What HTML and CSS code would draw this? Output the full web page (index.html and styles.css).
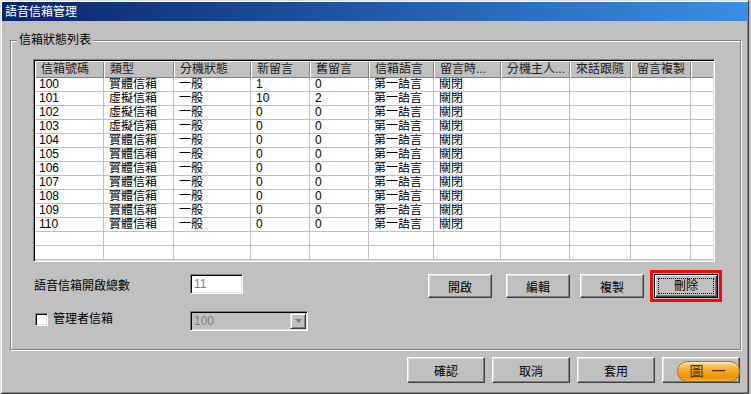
FILE: index.html
```html
<!DOCTYPE html>
<html>
<head>
    <title>語音信箱管理</title>
    <link rel="stylesheet" href="styles.css">
    <meta charset="UTF-8">
</head>
<body>
    <div class="window">
        <div class="title-bar">語音信箱管理</div>

        <div class="group">
            <span class="group-label">信箱狀態列表</span>

            <div class="list-view">
                <div class="list-row list-header">
                    <span>信箱號碼</span><span>類型</span><span>分機狀態</span><span>新留言</span><span>舊留言</span><span>信箱語言</span><span>留言時...</span><span>分機主人...</span><span>來話跟隨</span><span>留言複製</span><span></span>
                </div>
                <div class="list-row"><span>100</span><span>實體信箱</span><span>一般</span><span>1</span><span>0</span><span>第一語言</span><span>關閉</span><span></span><span></span><span></span><span></span></div>
                <div class="list-row"><span>101</span><span>虛擬信箱</span><span>一般</span><span>10</span><span>2</span><span>第一語言</span><span>關閉</span><span></span><span></span><span></span><span></span></div>
                <div class="list-row"><span>102</span><span>虛擬信箱</span><span>一般</span><span>0</span><span>0</span><span>第一語言</span><span>關閉</span><span></span><span></span><span></span><span></span></div>
                <div class="list-row"><span>103</span><span>虛擬信箱</span><span>一般</span><span>0</span><span>0</span><span>第一語言</span><span>關閉</span><span></span><span></span><span></span><span></span></div>
                <div class="list-row"><span>104</span><span>實體信箱</span><span>一般</span><span>0</span><span>0</span><span>第一語言</span><span>關閉</span><span></span><span></span><span></span><span></span></div>
                <div class="list-row"><span>105</span><span>實體信箱</span><span>一般</span><span>0</span><span>0</span><span>第一語言</span><span>關閉</span><span></span><span></span><span></span><span></span></div>
                <div class="list-row"><span>106</span><span>實體信箱</span><span>一般</span><span>0</span><span>0</span><span>第一語言</span><span>關閉</span><span></span><span></span><span></span><span></span></div>
                <div class="list-row"><span>107</span><span>實體信箱</span><span>一般</span><span>0</span><span>0</span><span>第一語言</span><span>關閉</span><span></span><span></span><span></span><span></span></div>
                <div class="list-row"><span>108</span><span>實體信箱</span><span>一般</span><span>0</span><span>0</span><span>第一語言</span><span>關閉</span><span></span><span></span><span></span><span></span></div>
                <div class="list-row"><span>109</span><span>實體信箱</span><span>一般</span><span>0</span><span>0</span><span>第一語言</span><span>關閉</span><span></span><span></span><span></span><span></span></div>
                <div class="list-row"><span>110</span><span>實體信箱</span><span>一般</span><span>0</span><span>0</span><span>第一語言</span><span>關閉</span><span></span><span></span><span></span><span></span></div>
                <div class="list-row"><span></span><span></span><span></span><span></span><span></span><span></span><span></span><span></span><span></span><span></span><span></span></div>
                <div class="list-row"><span></span><span></span><span></span><span></span><span></span><span></span><span></span><span></span><span></span><span></span><span></span></div>
            </div>

            <div class="controls">
                <div class="form-grid">
                    <span class="form-label">語音信箱開啟總數</span>
                    <div class="text-field">11</div>
                    <label class="check-label"><span class="checkbox"></span>管理者信箱</label>
                    <div class="combo">
                        <span class="combo-value">100</span>
                        <span class="combo-button">
                            <svg width="7" height="4" viewBox="0 0 7 4"><path d="M0 0h7L3.5 4z" fill="#808080"/></svg>
                        </span>
                    </div>
                </div>
                <div class="action-buttons">
                    <button class="win-button open-button">開啟</button>
                    <button class="win-button">編輯</button>
                    <button class="win-button">複製</button>
                    <button class="win-button default-button"><span class="focus-rect">刪除</span></button>
                </div>
            </div>
        </div>

        <div class="dialog-buttons">
            <button class="win-button wide">確認</button>
            <button class="win-button wide">取消</button>
            <button class="win-button wide">套用</button>
            <button class="win-button wide"></button>
            <span class="figure-badge">圖 一</span>
        </div>
    </div>
</body>
</html>
```

FILE: styles.css
```css
body {
    margin: 0;
    background-color: #c0c0c0;
    font-family: "Liberation Sans", "Noto Sans CJK TC", sans-serif;
    font-size: 12px;
    color: #000;
}

.window {
    width: 749px;
    height: 394px;
    box-sizing: border-box;
    border: 1px solid;
    border-color: #dfdfdf #404040 #404040 #dfdfdf;
    box-shadow: inset 1px 1px 0 #fff, inset -1px -1px 0 #808080;
    padding: 1px;
}

.title-bar {
    height: 17px;
    padding: 2px 0 0 3px;
    line-height: 17px;
    color: #fff;
    background: linear-gradient(to right, #0a246a, #3a8ee6);
}

/* group box with etched border */
.group {
    position: relative;
    height: 310px;
    box-sizing: border-box;
    margin: 19px 6px 0 8px;
    padding: 18px 0 0 22px;
    border: 1px solid #808080;
    box-shadow: inset 1px 1px 0 #fff, 1px 1px 0 #fff;
}

.group-label {
    position: absolute;
    left: 6px;
    top: -8px;
    padding: 0 2px;
    line-height: 14px;
    background-color: #c0c0c0;
}

/* list view */
.list-view {
    width: 682px;
    height: 203px;
    box-sizing: border-box;
    padding: 1px;
    border: 1px solid;
    border-color: #808080 #fff #fff #808080;
    box-shadow: inset 1px 1px 0 #000, inset -1px -1px 0 #dfdfdf;
    background-color: #fff;
    overflow: hidden;
}

.list-row {
    display: grid;
    grid-template-columns: 69px 70px 77px 59px 59px 65px 67px 69px 61px 60px 1fr;
    height: 14px;
}

.list-row span {
    border-right: 1px solid #c0c0c0;
    border-bottom: 1px solid #c0c0c0;
    padding-left: 5px;
    line-height: 13px;
    white-space: nowrap;
    overflow: hidden;
}

.list-row span:first-child {
    padding-left: 4px;
}

.list-row span:last-child {
    border-right: none;
}

.list-header {
    height: 17px;
}

.list-header span,
.list-header span:first-child {
    padding-left: 6px;
    line-height: 17px;
    border: none;
    background-color: #c0c0c0;
    color: #202020;
    box-shadow: inset 1px 1px 0 #fff, inset -1px -1px 0 #808080;
}

.list-header span:last-child {
    box-shadow: inset 1px 1px 0 #fff, inset 0 -1px 0 #808080;
}

/* form controls */
.controls {
    display: flex;
    margin-top: 12px;
}

.form-grid {
    display: grid;
    grid-template-columns: 157px 118px;
    grid-template-rows: 20px 20px;
    row-gap: 17px;
    align-items: center;
}

.form-label {
    padding-left: 1px;
}

.text-field,
.combo {
    height: 20px;
    box-sizing: border-box;
    padding: 1px;
    border: 1px solid;
    border-color: #808080 #fff #fff #808080;
    box-shadow: inset 1px 1px 0 #000, inset -1px -1px 0 #dfdfdf;
    color: #808080;
}

.text-field {
    width: 53px;
    padding-left: 3px;
    line-height: 16px;
    background-color: #fff;
}

.check-label {
    display: flex;
    align-items: center;
    gap: 5px;
    align-self: start;
    margin-top: 1px;
    line-height: 14px;
}

.checkbox {
    width: 13px;
    height: 13px;
    box-sizing: border-box;
    margin-left: 2px;
    border: 1px solid;
    border-color: #808080 #fff #fff #808080;
    box-shadow: inset 1px 1px 0 #000, inset -1px -1px 0 #dfdfdf;
    background-color: #fff;
}

.combo {
    width: 118px;
    display: flex;
    justify-content: space-between;
    background-color: #c0c0c0;
}

.combo-value {
    padding-left: 2px;
    line-height: 16px;
}

.combo-button {
    width: 16px;
    height: 16px;
    box-sizing: border-box;
    display: flex;
    align-items: center;
    justify-content: center;
    border: 1px solid;
    border-color: #dfdfdf #404040 #404040 #dfdfdf;
    box-shadow: inset 1px 1px 0 #fff, inset -1px -1px 0 #808080;
}

/* buttons */
.win-button {
    width: 64px;
    height: 24px;
    padding: 0;
    font-family: inherit;
    font-size: 12px;
    color: #000;
    background-color: #c0c0c0;
    border: 1px solid;
    border-color: #fff #404040 #404040 #fff;
    box-shadow: inset -1px -1px 0 #808080, inset 1px 1px 0 #dfdfdf;
}

.action-buttons {
    display: flex;
    gap: 10px;
    margin-left: 120px;
}

.action-buttons .open-button {
    margin-right: 4px;
}

.default-button {
    border: 1px solid #000;
    box-shadow: inset 1px 1px 0 #fff, inset -1px -1px 0 #404040, inset -2px -2px 0 #808080;
    outline: 3px solid #f00;
    outline-offset: 1px;
    padding: 3px;
}

.focus-rect {
    display: block;
    height: 100%;
    box-sizing: border-box;
    border: 1px dotted #000;
    line-height: 14px;
}

.dialog-buttons {
    position: relative;
    display: flex;
    justify-content: flex-end;
    gap: 7px;
    margin-top: 7px;
    padding-right: 7px;
}

.win-button.wide {
    width: 78px;
    height: 26px;
}

.figure-badge {
    position: absolute;
    top: 4px;
    right: 7px;
    width: 63px;
    height: 21px;
    box-sizing: border-box;
    border: 1px solid #b56a00;
    border-radius: 11px;
    background: linear-gradient(#ffdc8c, #f7a928 45%, #ee9300 80%, #f6b040);
    box-shadow: inset 0 1px 0 #fff3cf;
    text-align: center;
    line-height: 18px;
    font-size: 14px;
    letter-spacing: 2px;
    color: #4a3000;
}
```
